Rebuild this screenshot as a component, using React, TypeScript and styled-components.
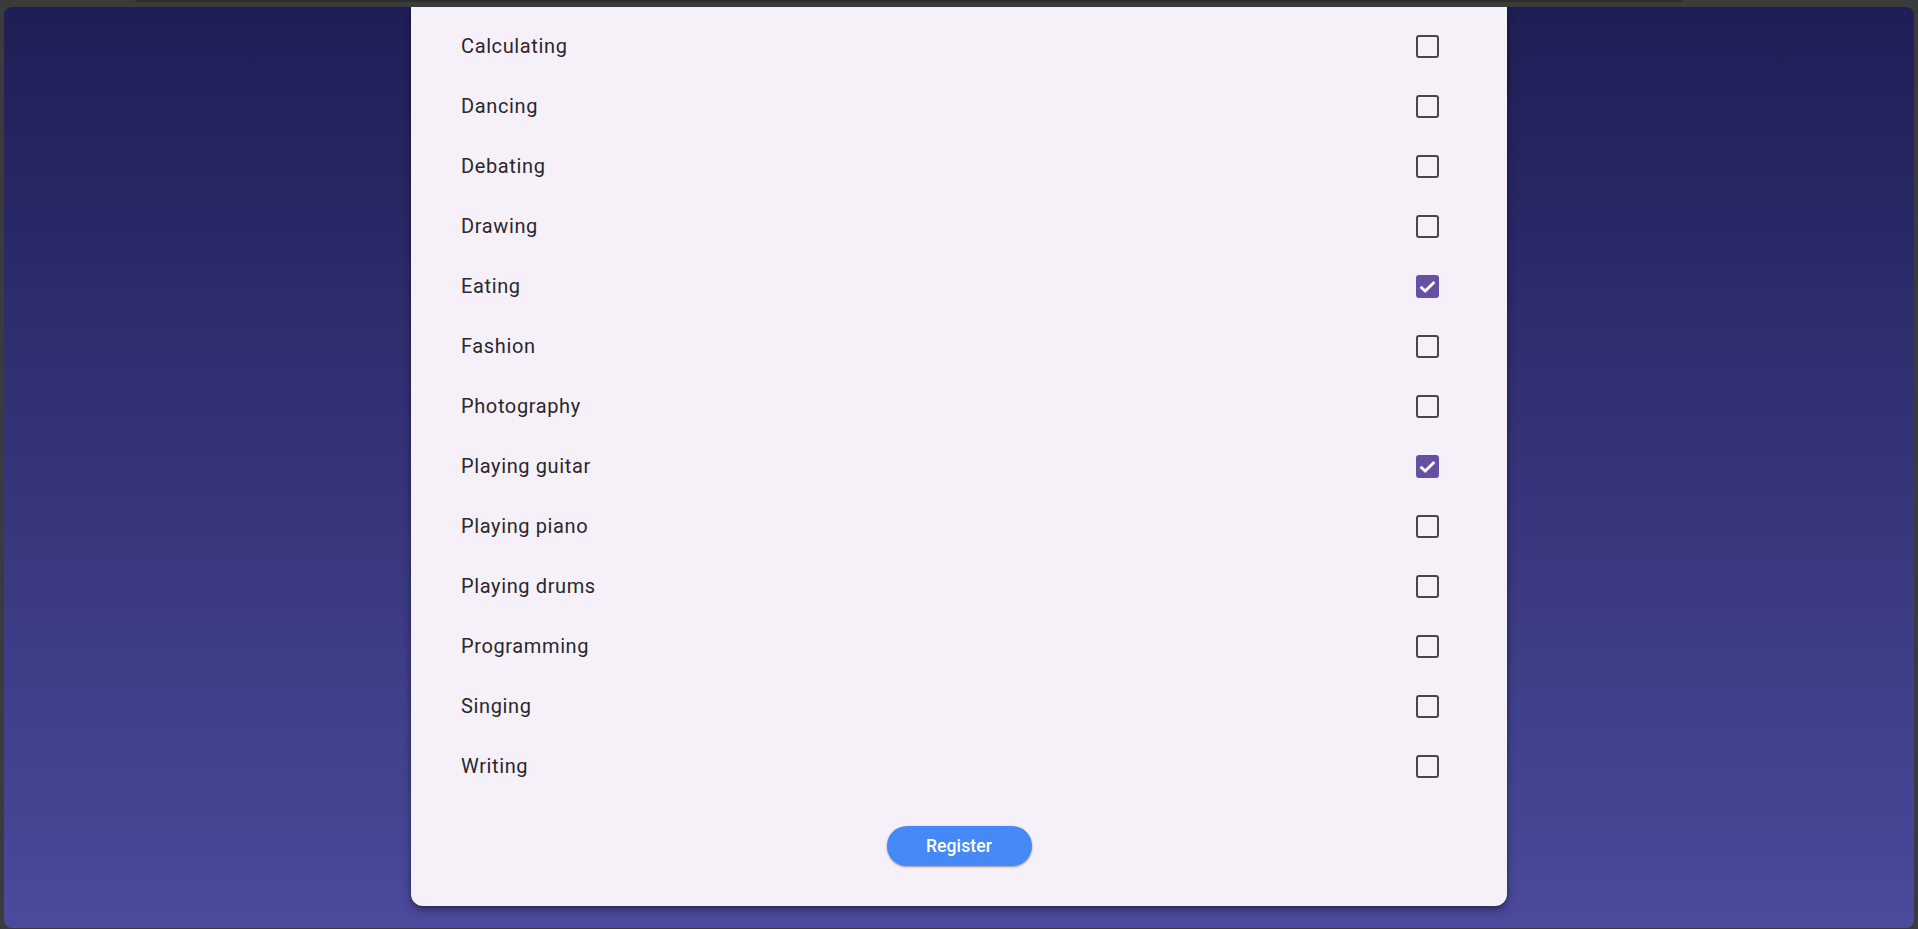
import React, { useState } from "react";
import styled, { createGlobalStyle } from "styled-components";

const GlobalStyle = createGlobalStyle`
  html, body {
    margin: 0;
    padding: 0;
    background: #3b3b3b;
    overflow: hidden;
  }
  * { box-sizing: border-box; }
`;

const Frame = styled.div`
  width: 1918px;
  height: 929px;
  display: flex;
  flex-direction: column;
  padding: 0 4px 1px 4px;
  background: #3b3b3b;
`;

const TopStrip = styled.div`
  height: 2px;
  width: 1547px;
  margin-left: 131px;
  margin-bottom: 5px;
  background: #2e2e2e;
  border-radius: 0 0 4px 4px;
  flex-shrink: 0;
`;

const Panel = styled.div`
  flex: 1;
  border-radius: 8px;
  background: linear-gradient(180deg, #1f1e56 0%, #4b4a9c 100%);
  display: flex;
  justify-content: center;
  align-items: flex-start;
  overflow: hidden;
`;

const Card = styled.div`
  width: 1096px;
  background: #f6f1f9;
  border-radius: 0 0 12px 12px;
  box-shadow: 0 4px 10px rgba(0, 0, 0, 0.35), 0 1px 3px rgba(0, 0, 0, 0.2);
  padding: 9px 0 40px 0;
  display: flex;
  flex-direction: column;
`;

const List = styled.div`
  display: flex;
  flex-direction: column;
`;

const Row = styled.label`
  height: 60px;
  display: flex;
  align-items: center;
  justify-content: space-between;
  padding: 0 68px 0 50px;
  cursor: pointer;
`;

const Label = styled.span`
  font-family: Roboto, "Noto Sans", sans-serif;
  font-size: 20px;
  letter-spacing: 0.62px;
  color: #2a272e;
`;

const Box = styled.span<{ $checked: boolean }>`
  width: 23px;
  height: 23px;
  border-radius: 3px;
  border: ${(p) => (p.$checked ? "none" : "2.5px solid #49454f")};
  background: ${(p) => (p.$checked ? "#6750a4" : "transparent")};
  display: flex;
  align-items: center;
  justify-content: center;
`;

const ButtonRow = styled.div`
  display: flex;
  justify-content: center;
  margin-top: 30px;
`;

const RegisterButton = styled.button`
  width: 145px;
  height: 40px;
  border: none;
  border-radius: 20px;
  background: #4589f7;
  color: #ffffff;
  font-family: Roboto, "Noto Sans", sans-serif;
  font-size: 17.5px;
  font-weight: 500;
  letter-spacing: 0.12px;
  box-shadow: 0 1px 2px rgba(0, 0, 0, 0.3), 0 1px 3px rgba(0, 0, 0, 0.12);
  cursor: pointer;
`;

const hobbies = [
  "Calculating",
  "Dancing",
  "Debating",
  "Drawing",
  "Eating",
  "Fashion",
  "Photography",
  "Playing guitar",
  "Playing piano",
  "Playing drums",
  "Programming",
  "Singing",
  "Writing",
];

const CheckMark = () => (
  <svg width="23" height="23" viewBox="0 0 18 18" aria-hidden="true">
    <path
      d="M3.6 9.2 L7.2 12.6 L14.4 5.4"
      fill="none"
      stroke="#ffffff"
      strokeWidth="2.2"
    />
  </svg>
);

export default function App() {
  const [checked, setChecked] = useState<Record<string, boolean>>({
    Eating: true,
    "Playing guitar": true,
  });

  return (
    <>
      <GlobalStyle />
      <Frame>
        <TopStrip />
        <Panel>
          <Card>
            <List>
              {hobbies.map((h) => (
                <Row
                  key={h}
                  onClick={() => setChecked((c) => ({ ...c, [h]: !c[h] }))}
                >
                  <Label>{h}</Label>
                  <Box $checked={!!checked[h]}>{checked[h] && <CheckMark />}</Box>
                </Row>
              ))}
            </List>
            <ButtonRow>
              <RegisterButton>Register</RegisterButton>
            </ButtonRow>
          </Card>
        </Panel>
      </Frame>
    </>
  );
}
